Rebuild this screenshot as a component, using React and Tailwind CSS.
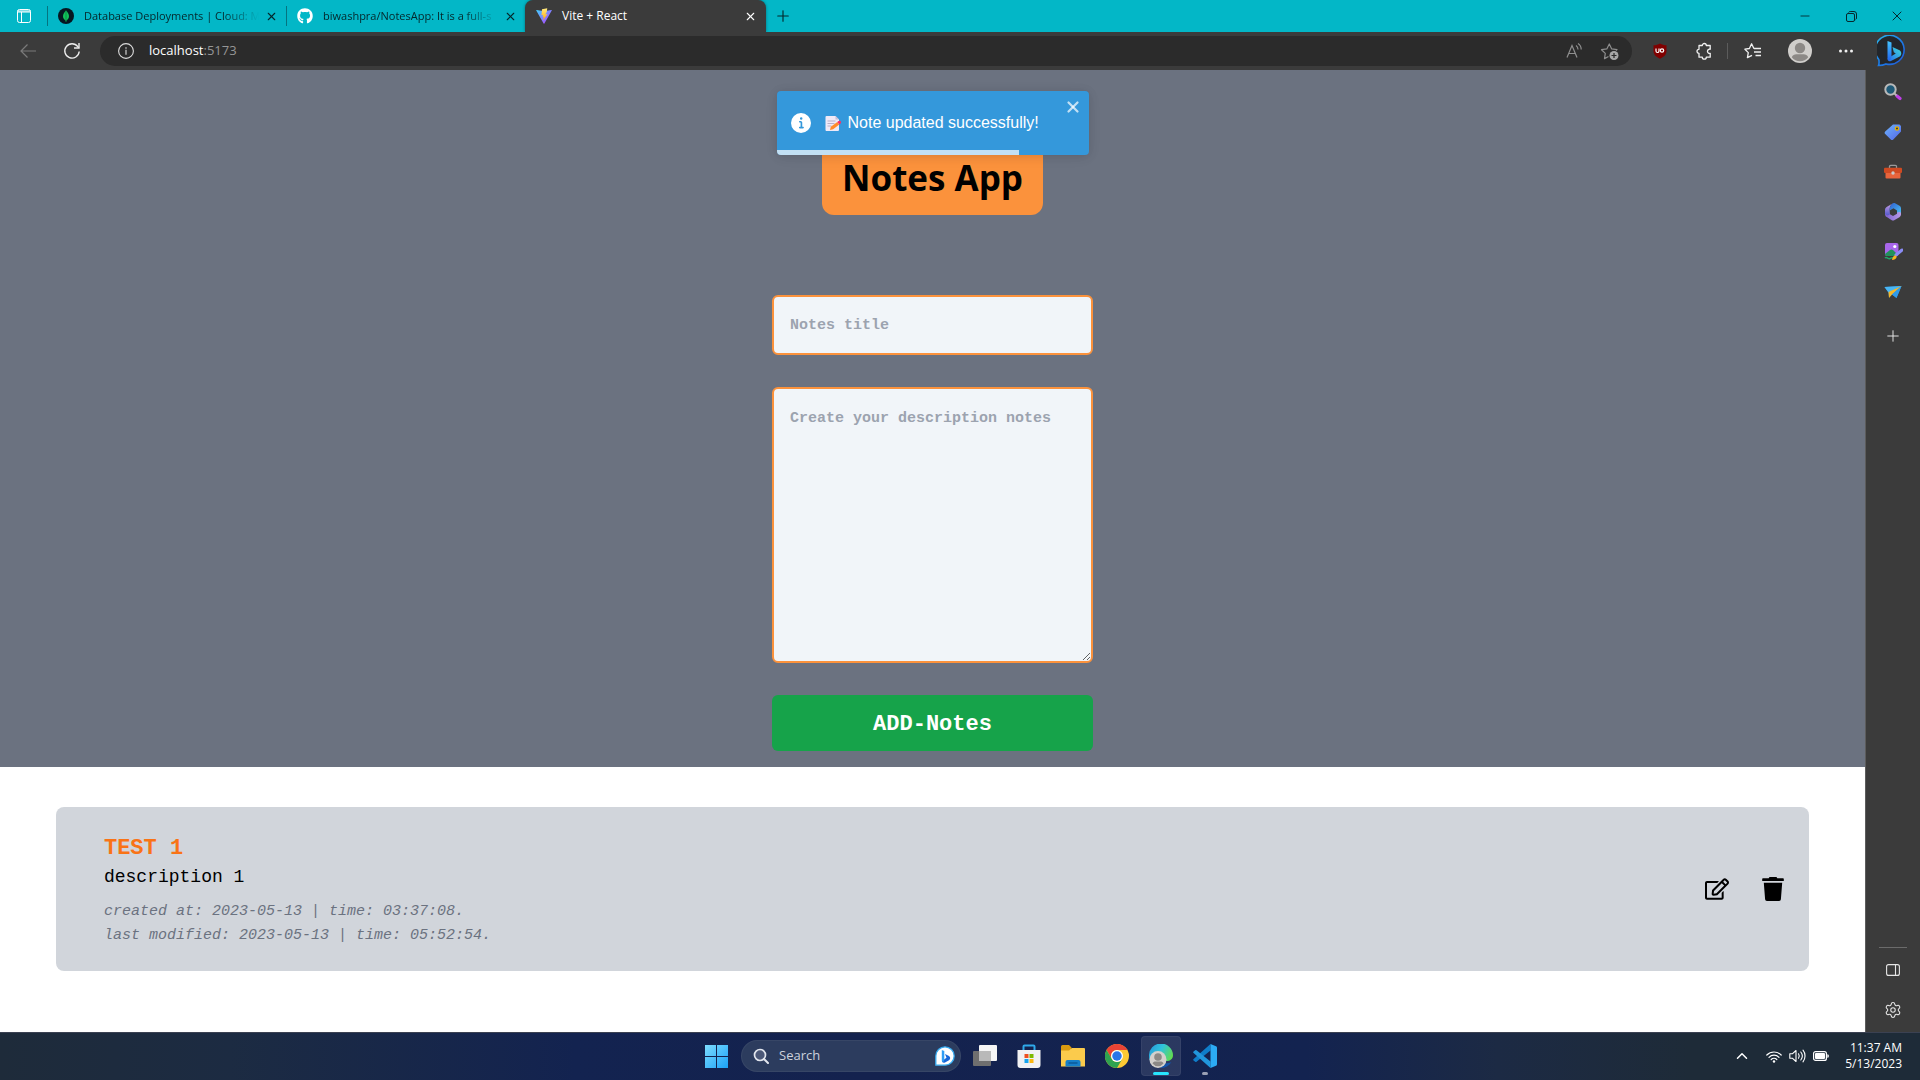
import React from "react";
import { FaGithub, FaRegEdit } from "react-icons/fa";
import { Settings, X, Plus, Minus, ChevronUp } from "lucide-react";

/* ---------- browser chrome icons ---------- */

const TabActionsIcon = () => (
  <svg width="16" height="16" viewBox="0 0 16 16" fill="none" stroke="#fff">
    <rect x="1.5" y="1.5" width="13" height="13" rx="2" />
    <path d="M1.5 3h13M1.5 4h13M5.5 4v10.5" />
  </svg>
);

const MongoIcon = () => (
  <svg width="16" height="16" viewBox="0 0 16 16" className="shrink-0">
    <circle cx="8" cy="8" r="8" fill="#061621" />
    <path d="M8 2.5c2 2 3 3.800 3 5.800S9.800 11.700 8.300 12.700V14h-.6v-1.300C6.200 11.700 5 10.300 5 8.300S6 4.500 8 2.500z" fill="#10c05a" />
    <path d="M8 2.500v10.200" stroke="#0b7a3c" strokeWidth=".7" />
  </svg>
);

const ViteIcon = () => (
  <svg width="16" height="16" viewBox="0 0 32 32">
    <defs>
      <linearGradient id="viteA" x1="0" y1="0" x2="1" y2="1">
        <stop offset="0" stopColor="#41d1ff" />
        <stop offset="1" stopColor="#bd34fe" />
      </linearGradient>
      <linearGradient id="viteB" x1="0" y1="0" x2="0" y2="1">
        <stop offset="0" stopColor="#ffea83" />
        <stop offset="1" stopColor="#ffa800" />
      </linearGradient>
    </defs>
    <path d="M31.500 5.200 16.800 31a1 1 0 0 1-1.600 0L.5 5.200A1 1 0 0 1 1.500 3.800L16 6.400l14.400-2.600a1 1 0 0 1 1.100 1.400z" fill="url(#viteA)" />
    <path d="M22.500.5 12 2.500 11 14.500l3.200-.6-1 4.400 2.500-.7L14 25l9-13-4.500.8 3-5z" fill="url(#viteB)" />
  </svg>
);

const BackIcon = () => (
  <svg width="18" height="18" viewBox="0 0 18 18" fill="none" stroke="#7b7b7b" strokeWidth="1.200">
    <path d="M17 9H2M8.500 2.500 2 9l6.500 6.500" />
  </svg>
);

const ReloadIcon = () => (
  <svg width="18" height="18" viewBox="0 0 18 18" fill="none" stroke="#ededed" strokeWidth="1.400">
    <path d="M16.200 9.500A7.200 7.200 0 1 1 14.800 4.600L15.800 5.800" />
    <path d="M16 1v5h-5" />
  </svg>
);

const InfoIcon = () => (
  <svg width="16" height="16" viewBox="0 0 16 16" fill="none" stroke="#dcdcdc">
    <circle cx="8" cy="8" r="7.400" strokeWidth="1.100" />
    <path d="M8 6.800v5M8 4.200v1.500" stroke="#a8a8a8" strokeWidth="1.600" />
  </svg>
);

const ReadAloudIcon = () => (
  <svg width="18" height="18" viewBox="0 0 18 18" fill="none" stroke="#8e8e8e" strokeWidth="1.200">
    <path d="M2 15.500 7 3.500l5 12M4 11.500h6" />
    <path d="M11 3.500c1.500 1 2 2.300 2 4M13 1.500c2.300 1.500 3.200 3.500 3.200 6" />
  </svg>
);

const StarPlusIcon = () => (
  <svg width="20" height="20" viewBox="0 0 20 20" fill="none" stroke="#8e8e8e" strokeWidth="1.200">
    <path d="M8.500 15.500l-4 2.100.8-5.200L1.500 8.700l5.300-.8L9.300 3l2.400 4.900 5.300.8-1 1" strokeLinejoin="round" />
    <circle cx="14" cy="14.500" r="4.500" fill="#a6a6a6" stroke="none" />
    <path d="M14 12v5M11.500 14.500h5" stroke="#292929" />
  </svg>
);

const ShieldIcon = () => (
  <svg width="16" height="16" viewBox="0 0 16 16">
    <path d="M8 .5c2 1.200 4 1.700 6.500 1.800V8c0 3.800-2.800 6-6.500 7.800C4.300 14 1.500 11.800 1.500 8V2.300C4 2.200 6 1.700 8 .5z" fill="#800000" />
    <path d="M4 5.500V8a1.500 1.500 0 0 0 3 0V5.500" fill="none" stroke="#fff" strokeWidth="1.200" />
    <circle cx="10" cy="7.500" r="1.700" fill="none" stroke="#fff" strokeWidth="1.200" />
  </svg>
);

const PuzzleIcon = () => (
  <svg width="18" height="18" viewBox="0 0 18 18" fill="none" stroke="#f0f0f0" strokeWidth="1.300" strokeLinejoin="round">
    <path d="M4 3.500h3.300a2 2 0 0 1 4 0h3.900v3.800a2.100 2.100 0 1 0 0 4v3.900h-3.900a2 2 0 0 1-4 0H4v-3.900a2 2 0 1 1 0-4z" />
  </svg>
);

const FavoritesIcon = () => (
  <svg width="18" height="18" viewBox="0 0 18 18" fill="none" stroke="#f0f0f0" strokeWidth="1.300" strokeLinejoin="round">
    <path d="M10 6.800 7.600 1.800 5.400 6.500.9 7.200l3.400 3.400-.9 5L8 13.300" />
    <path d="M10 6.500h7M10 10h7M11.500 13.500H17" />
  </svg>
);

const AvatarIcon = () => (
  <svg width="24" height="24" viewBox="0 0 24 24">
    <circle cx="12" cy="12" r="12" fill="#d0cecb" />
    <circle cx="12" cy="9" r="5.200" fill="#8c8986" />
    <path d="M3.800 18.200c1-2.200 2.600-3 4.500-3h7.400c1.900 0 3.500.8 4.500 3a10.400 10.400 0 0 1-16.400 0z" fill="#8c8986" />
  </svg>
);

const DotsIcon = () => (
  <svg width="16" height="16" viewBox="0 0 16 16" fill="#f0f0f0">
    <circle cx="2.500" cy="8" r="1.500" />
    <circle cx="8" cy="8" r="1.500" />
    <circle cx="13.500" cy="8" r="1.500" />
  </svg>
);

const BingIcon = () => (
  <svg width="32" height="32" viewBox="0 0 32 32">
    <defs>
      <linearGradient id="bingRing" x1="0" y1="0" x2="1" y2="1">
        <stop offset="0" stopColor="#2bb8e8" />
        <stop offset=".5" stopColor="#1c7fe8" />
        <stop offset="1" stopColor="#2257d8" />
      </linearGradient>
      <linearGradient id="bingB" x1="0" y1="0" x2="0" y2="1">
        <stop offset="0" stopColor="#45c4ff" />
        <stop offset="1" stopColor="#2168f0" />
      </linearGradient>
      <linearGradient id="bingC" x1="0" y1="1" x2="1" y2="0">
        <stop offset="0" stopColor="#2466f0" />
        <stop offset="1" stopColor="#3fdcd8" />
      </linearGradient>
    </defs>
    <path d="M1.500 30.500c.8-2 .8-3.500.3-6A14.500 14.500 0 1 1 9 28.900c-2.200 1-4.700 1.500-7.500 1.600z" fill="#23262b" stroke="url(#bingRing)" strokeWidth="1.600" />
    <path d="M15.500 12l6.500 3c2.800 1.300 3 5 .7 6.600L14 26c-2 .8-3.500 0-3.500-2.500l8.300-5-2-1.200z" fill="url(#bingC)" />
    <path d="M10.500 6l4 1.500v13.800l-1 3.500c-1.500.8-3 .2-3-1.800z" fill="url(#bingB)" />
  </svg>
);

const RestoreIcon = () => (
  <svg width="11" height="11" viewBox="0 0 11 11" fill="none" stroke="#06282c">
    <rect x=".5" y="2.500" width="8" height="8" rx="1.500" />
    <path d="M2.500 1.500c.4-.7 1-1 1.700-1H8A2.500 2.500 0 0 1 10.500 3v4c0 .7-.3 1.300-1 1.700" />
  </svg>
);

/* ---------- sidebar icons ---------- */

const SearchColorIcon = () => (
  <svg width="18" height="18" viewBox="0 0 18 18">
    <path d="M13 13l3 2.500" stroke="#c03fe8" strokeWidth="3.200" strokeLinecap="round" />
    <path d="M10.500 10.500l2 2" stroke="#b9b9b9" strokeWidth="1.800" />
    <circle cx="6.500" cy="6.500" r="5.200" fill="#1f5a78" stroke="#b9b9b9" strokeWidth="2" />
  </svg>
);

const TagIcon = () => (
  <svg width="18" height="18" viewBox="0 0 18 18">
    <defs>
      <linearGradient id="tagA" x1="0" y1="0" x2="1" y2="1">
        <stop offset="0" stopColor="#6cb4fb" />
        <stop offset="1" stopColor="#5565e8" />
      </linearGradient>
    </defs>
    <path d="M9 1.500h6.500l1.500 1.500v5.500L9.300 16.400a1.800 1.800 0 0 1-2.500 0L1.200 11a1.800 1.800 0 0 1 0-2.500z" fill="url(#tagA)" />
    <circle cx="13" cy="5.500" r="1.700" fill="#3d3d3d" stroke="#e8b400" strokeWidth="1.200" />
  </svg>
);

const ToolboxIcon = () => (
  <svg width="18" height="18" viewBox="0 0 18 18">
    <path d="M5.500 5V3.500a1.200 1.200 0 0 1 1.200-1.200h4.600a1.200 1.200 0 0 1 1.200 1.200V5" fill="none" stroke="#9a9a9a" strokeWidth="1.300" />
    <path d="M1.500 9h15v5.500a1 1 0 0 1-1 1h-13a1 1 0 0 1-1-1z" fill="#e8643c" />
    <rect y="4.800" width="18" height="5.200" rx="1" fill="#d04a22" />
    <circle cx="9" cy="10" r="1.700" fill="#c8c8c8" />
  </svg>
);

const M365Icon = () => (
  <svg width="18" height="18" viewBox="0 0 18 18">
    <defs>
      <linearGradient id="mA" x1="0" y1="0" x2="0" y2="1">
        <stop offset="0" stopColor="#c9a0e8" />
        <stop offset="1" stopColor="#4a54c8" />
      </linearGradient>
      <linearGradient id="mB" x1="0" y1="0" x2="1" y2="1">
        <stop offset="0" stopColor="#2f5fd0" />
        <stop offset="1" stopColor="#4cc4f4" />
      </linearGradient>
      <linearGradient id="mC" x1="0" y1="0" x2="1" y2="0">
        <stop offset="0" stopColor="#7b5fd0" />
        <stop offset="1" stopColor="#b89be6" />
      </linearGradient>
    </defs>
    <path d="M9 .3 2.600 3.900A3.200 3.200 0 0 0 1 6.700v5.100l5.200 1.500-.6-6.300C5.600 4 6.500 1.500 9 .3z" fill="url(#mA)" />
    <path d="M9 .3c1-.4 1.600-.3 2.500.2l4 2.300C16.500 3.400 17 4.400 17 5.500v6l-4-1V7.500L9.500 5.300 5.700 7.500C5.500 4 6.700 1.300 9 .3z" fill="url(#mB)" />
    <path d="M1 10.500c0 2.500.8 3 1.800 3.600l4.600 2.900a3 3 0 0 0 3.200 0l4.800-2.800A3.200 3.200 0 0 0 17 11.500V10c-.5-1-2-1.500-4-.5v1.200l-4 2.400-3-1.800C4.500 12.500 2.500 12.800 1 10.500z" fill="url(#mC)" />
  </svg>
);

const DesignerIcon = () => (
  <svg width="19" height="18" viewBox="0 0 19 18">
    <rect x="1" y="0" width="13.500" height="13" rx="2" fill="#a866ea" />
    <circle cx="10.800" cy="3.500" r="1.600" fill="#fff" />
    <path d="M1 11l5-4c1-.8 2-.8 3 0l4 4v2H3a2 2 0 0 1-2-2z" fill="#21925b" />
    <path d="M1 15c2-2 3 1.500 5 .5s2-1.500 4 0" fill="none" stroke="#1fa768" strokeWidth="1.500" />
    <path d="M12 12l6-5" stroke="#8a8cf5" strokeWidth="3" strokeLinecap="round" />
    <path d="M8 17c.5-3 1.500-4.500 3.500-4.500S13 17 8 17z" fill="#f8b51e" />
  </svg>
);

const PlaneIcon = () => (
  <svg width="18" height="18" viewBox="0 0 18 18">
    <path d="M.5 4 17.500 3 12.500 15 8 11.500 5 14.500 4.500 9.500z" fill="#2a92e0" />
    <path d="M.5 4 17.500 3 4.500 9.500z" fill="#48b6f5" />
    <path d="M4.500 9 17.500 3 8 11.500 5 15z" fill="#f4b82b" />
    <path d="M8 11.500 17.500 3 12.500 15z" fill="#2f9bea" />
  </svg>
);

const PanelIcon = () => (
  <svg width="14" height="12" viewBox="0 0 14 12" fill="none" stroke="#e6e6e6" strokeWidth="1.100">
    <rect x=".6" y=".6" width="12.800" height="10.800" rx="2" />
    <path d="M9.500.6v10.800" />
  </svg>
);

/* ---------- page icons ---------- */

const ToastInfoIcon = () => (
  <svg width="20" height="20" viewBox="0 0 24 24" fill="#fff">
    <path d="M12 0a12 12 0 1 0 12 12A12.013 12.013 0 0 0 12 0zm.25 5a1.500 1.500 0 1 1-1.500 1.500 1.500 1.500 0 0 1 1.500-1.500zm2.250 13.500h-4a1 1 0 0 1 0-2h.75a.25.25 0 0 0 .25-.25v-4.500a.25.25 0 0 0-.25-.25h-.75a1 1 0 0 1 0-2h1a2 2 0 0 1 2 2v4.750a.25.25 0 0 0 .25.25h.75a1 1 0 1 1 0 2z" />
  </svg>
);

const MemoIcon = () => (
  <svg width="16" height="17" viewBox="0 0 16 17">
    <path d="M1.500 1h9L14 4.500V15a1 1 0 0 1-1 1H1.500a1 1 0 0 1-1-1V2a1 1 0 0 1 1-1z" fill="#efe9f7" />
    <path d="M10.500 1v3.500H14z" fill="#c6bdd6" />
    <path d="M2.500 6h8M2.500 8.500h7M2.500 11h4" stroke="#b9afc9" strokeWidth="1.100" />
    <path d="M5 15l.8-3.300 6.500-4.700 2 2.600-6.200 4.700z" fill="#ff8b2b" />
    <path d="M12.300 7l1.200-.9a1.400 1.400 0 0 1 2 2.500l-1.200 1z" fill="#f5316b" />
  </svg>
);

const TrashIcon = () => (
  <svg width="24" height="24" viewBox="0 0 24 24" fill="#000">
    <path d="M8.500 0h7l.8 1.300H22a.8.800 0 0 1 .8.800v2H1.200v-2a.8.800 0 0 1 .8-.8h5.700z" />
    <path d="M2.800 5.800h18.400l-1.300 16.500a1.800 1.800 0 0 1-1.800 1.700H5.900a1.800 1.800 0 0 1-1.800-1.700z" />
  </svg>
);

/* ---------- taskbar icons ---------- */

const WindowsIcon = () => (
  <svg width="23" height="23" viewBox="0 0 23 23">
    <defs>
      <linearGradient id="winA" x1="0" y1="0" x2="1" y2="1">
        <stop offset="0" stopColor="#7ddcff" />
        <stop offset="1" stopColor="#1ba2f7" />
      </linearGradient>
    </defs>
    <path d="M0 0h11v11H0zM12 0h11v11H12zM0 12h11v11H0zM12 12h11v11H12z" fill="url(#winA)" />
  </svg>
);

const SearchIcon = () => (
  <svg width="16" height="16" viewBox="0 0 16 16" fill="none" stroke="#e2e6ee" strokeWidth="1.700">
    <circle cx="7" cy="7" r="5.500" fill="#4b5878" />
    <path d="M11 11l4 4" strokeWidth="2" strokeLinecap="round" />
  </svg>
);

const BingSmallIcon = () => (
  <svg width="20" height="20" viewBox="0 0 20 20">
    <path d="M.8 19.200V10A9.200 9.200 0 1 1 10 19.200z" fill="#fff" stroke="#35a9ee" strokeWidth="1.300" />
    <path d="M10 8l4 2c1.600.9 1.600 3.200 0 4.200l-4 2.200c-1.500.7-3 .2-3-1.400l4.500-3.200z" fill="#1766d8" />
    <path d="M6.800 4l2.500 1v8.800l-.8 2c-1 .2-1.700-.3-1.700-1.300z" fill="#2f9df4" />
  </svg>
);

const TaskViewIcon = () => (
  <svg width="24" height="24" viewBox="0 0 24 24">
    <rect x="6" y="1" width="18" height="16" rx="1" fill="#f5f5f5" />
    <rect x="0" y="7" width="18" height="15" rx="1" fill="#6f6f6f" />
    <path d="M6 7h12v10H6z" fill="#b9b9b9" />
  </svg>
);

const StoreIcon = () => (
  <svg width="24" height="24" viewBox="0 0 24 24">
    <path d="M6.500 7V2.500a1 1 0 0 1 1-1h9a1 1 0 0 1 1 1V7" fill="none" stroke="#2fa9ea" strokeWidth="2" />
    <path d="M.5 6h23v15a3 3 0 0 1-3 3h-17a3 3 0 0 1-3-3z" fill="#f1f1f3" />
    <path d="M7.500 10h4v4h-4z" fill="#ee5022" />
    <path d="M12.500 10h4v4h-4z" fill="#7db900" />
    <path d="M7.500 15h4v4h-4z" fill="#17a4ee" />
    <path d="M12.500 15h4v4h-4z" fill="#fcb710" />
  </svg>
);

const ExplorerIcon = () => (
  <svg width="24" height="24" viewBox="0 0 24 24">
    <path d="M0 2.500A1.500 1.500 0 0 1 1.500 1H8l2.500 2.500V8H0z" fill="#d99a10" />
    <path d="M0 6.500h8L11 4h12a1 1 0 0 1 1 1v17.500H0z" fill="#fbcb4c" />
    <path d="M4.500 22.500V18a2 2 0 0 1 2-2h11a2 2 0 0 1 2 2v4.500z" fill="#167fc9" />
    <path d="M7.500 19h9" stroke="#0c5a98" strokeWidth="1.500" />
  </svg>
);

const ChromeIcon = () => (
  <svg width="24" height="24" viewBox="0 0 48 48">
    <circle cx="24" cy="24" r="24" fill="#fcc934" />
    <path d="M3.200 12A24 24 0 0 1 44.800 12H24a12 12 0 0 0-10.400 18z" fill="#ea4335" />
    <path d="M3.200 12A24 24 0 0 0 24 48l10.400-18a12 12 0 0 1-20.800 0z" fill="#2fa350" />
    <circle cx="24" cy="24" r="12" fill="#fff" />
    <circle cx="24" cy="24" r="9.500" fill="#2a76e8" />
  </svg>
);

const EdgeIcon = () => (
  <svg width="24" height="24" viewBox="0 0 24 24">
    <defs>
      <linearGradient id="edgeA" x1="0" y1="0" x2="1" y2=".5">
        <stop offset="0" stopColor="#2794d8" />
        <stop offset=".5" stopColor="#2fc2dc" />
        <stop offset="1" stopColor="#62dc50" />
      </linearGradient>
    </defs>
    <path d="M0 12A12 12 0 0 1 24 11c0 4-3 6-6.500 6-3 0-4-1.500-3-3l-4 8C4 22 0 18 0 12z" fill="url(#edgeA)" />
    <path d="M9 15c1 4 7 6 13.500 3C20 22 16 24 12 24z" fill="#1453a8" />
    <g transform="translate(0 6.500)">
      <circle cx="9" cy="9" r="8.500" fill="#d3d0cd" />
      <circle cx="9" cy="6.500" r="3.800" fill="#8c8986" />
      <path d="M3.500 13c.6-1.500 1.700-2 3-2h5c1.300 0 2.400.5 3 2A7 7 0 0 1 3.500 13z" fill="#8c8986" />
    </g>
  </svg>
);

const VSCodeIcon = () => (
  <svg width="24" height="24" viewBox="0 0 24 24">
    <path d="M17.500 0v6.500L3.500 17.800a1 1 0 0 1-1.300 0L.6 16.400a1 1 0 0 1 0-1.500z" fill="#0f7dc9" />
    <path d="M17.500 24v-6.500L3.500 6.200a1 1 0 0 0-1.300 0L.6 7.600a1 1 0 0 0 0 1.500z" fill="#2196dc" />
    <path d="M17.500 0 23 2.300a1.500 1.500 0 0 1 1 1.400v16.600a1.500 1.500 0 0 1-1 1.400L17.500 24z" fill="#2cabf4" />
  </svg>
);

const WifiIcon = () => (
  <svg width="16" height="13" viewBox="0 0 16 13" fill="none" stroke="#fff" strokeWidth="1.200" strokeLinecap="round">
    <path d="M.8 5a10.200 10.200 0 0 1 14.400 0M3 7.300a7 7 0 0 1 10 0M5.200 9.500a4 4 0 0 1 5.600 0" />
    <circle cx="8" cy="11.500" r="1.200" fill="#fff" stroke="none" />
  </svg>
);

const VolumeIcon = () => (
  <svg width="17" height="14" viewBox="0 0 17 14" fill="none" stroke="#fff" strokeWidth="1.100" strokeLinecap="round" strokeLinejoin="round">
    <path d="M.8 4.800h2.500L7 1.500v11L3.300 9.200H.8z" />
    <path d="M9.500 4.800c.9 1.300.9 3.100 0 4.400M11.800 3c1.800 2.300 1.800 5.700 0 8M14 1.200c2.700 3.300 2.700 8.300 0 11.600" />
  </svg>
);

const BatteryIcon = () => (
  <svg width="16" height="10" viewBox="0 0 16 10">
    <rect x=".6" y=".6" width="12.800" height="8.800" rx="2" fill="none" stroke="#fff" strokeWidth="1.200" />
    <rect x="2" y="2" width="10" height="6" rx="1" fill="#fff" />
    <path d="M14.300 3.200c1.200 0 1.500.8 1.500 1.800s-.3 1.800-1.500 1.800z" fill="#fff" />
  </svg>
);

/* ---------- browser ---------- */

function BackgroundTab({ icon, title }) {
  return (
    <div className="flex h-full w-[238px] shrink-0 items-center pr-[7px] pl-2.5">
      {icon}
      <span className="ml-2.5 min-w-0 flex-1 text-[11px] whitespace-nowrap text-[#05262a] [mask-image:linear-gradient(to_right,black_calc(100%-40px),transparent_calc(100%-4px))]">
        {title}
      </span>
      <button aria-label="Close tab" className="flex h-4 w-4 shrink-0 items-center justify-center text-[#05262a]">
        <X size={13} strokeWidth={2} />
      </button>
    </div>
  );
}

function TabStrip() {
  return (
    <div className="flex h-8 items-center bg-[#03b7c7]">
      <button aria-label="Tab actions" className="flex h-8 w-[47px] shrink-0 items-center justify-center">
        <TabActionsIcon />
      </button>
      <div className="h-5 w-px shrink-0 bg-[#057480]" />
      <BackgroundTab icon={<MongoIcon />} title="Database Deployments | Cloud: M" />
      <div className="h-5 w-px shrink-0 bg-[#057480]" />
      <BackgroundTab icon={<FaGithub size={16} color="#fff" className="shrink-0" />} title="biwashpra/NotesApp: It is a full-s" />
      <div className="flex h-8 w-[241px] shrink-0 items-center rounded-t-lg bg-[#3b3b3b] pr-2 pl-[11px] text-white shadow-[0_0_3px_#0006]">
        <ViteIcon />
        <span className="ml-2.5 flex-1 text-[12px]">Vite + React</span>
        <button aria-label="Close tab" className="flex h-4 w-4 items-center justify-center">
          <X size={13} strokeWidth={2} />
        </button>
      </div>
      <button aria-label="New tab" className="ml-2 flex h-6 w-[18px] items-center justify-center text-[#05262a]">
        <Plus size={18} strokeWidth={1.5} className="shrink-0" />
      </button>
      <div className="ml-auto flex h-full">
        <button aria-label="Minimize" className="flex w-[46px] items-center justify-center text-[#06282c]">
          <Minus size={14} strokeWidth={1.5} />
        </button>
        <button aria-label="Restore" className="flex w-[46px] items-center justify-center">
          <RestoreIcon />
        </button>
        <button aria-label="Close window" className="flex w-[46px] items-center justify-center text-[#06282c]">
          <X size={16} strokeWidth={1.5} />
        </button>
      </div>
    </div>
  );
}

function ToolButton({ label, children, className = "w-11" }) {
  return (
    <button aria-label={label} className={"flex h-8 shrink-0 items-center justify-center " + className}>
      {children}
    </button>
  );
}

function Toolbar() {
  return (
    <div className="flex h-[38px] items-center bg-[#3b3b3b] pr-[11px] pl-1.5">
      <ToolButton label="Back">
        <BackIcon />
      </ToolButton>
      <ToolButton label="Refresh">
        <ReloadIcon />
      </ToolButton>
      <div className="ml-1.5 flex h-[30px] flex-1 items-center rounded-full bg-[#2b2b2b] pr-1 pl-[18px]">
        <InfoIcon />
        <div className="ml-[15px] flex-1 text-[13px] text-white">
          localhost<span className="text-[#969696]">:5173</span>
        </div>
        <ToolButton label="Read aloud" className="w-9">
          <ReadAloudIcon />
        </ToolButton>
        <ToolButton label="Add to favorites" className="w-9">
          <StarPlusIcon />
        </ToolButton>
      </div>
      <ToolButton label="uBlock" className="ml-1.5 w-11">
        <ShieldIcon />
      </ToolButton>
      <ToolButton label="Extensions">
        <PuzzleIcon />
      </ToolButton>
      <div className="ml-px h-4 w-px bg-[#5c5c5c]" />
      <ToolButton label="Favorites" className="w-[50px]">
        <FavoritesIcon />
      </ToolButton>
      <ToolButton label="Profile">
        <AvatarIcon />
      </ToolButton>
      <ToolButton label="Settings and more" className="ml-1 w-10">
        <DotsIcon />
      </ToolButton>
      <ToolButton label="Bing" className="ml-[11px] w-8">
        <BingIcon />
      </ToolButton>
    </div>
  );
}

const sidebarItems = [
  ["Search", SearchColorIcon],
  ["Shopping", TagIcon],
  ["Tools", ToolboxIcon],
  ["Microsoft 365", M365Icon],
  ["Image Creator", DesignerIcon],
  ["Drop", PlaneIcon],
];

function Sidebar() {
  return (
    <aside className="flex w-[55px] shrink-0 flex-col items-center border-l border-[#5c5c5c] bg-[#3b3b3b] pt-[2px]">
      {sidebarItems.map(([label, Icon]) => (
        <button key={label} aria-label={label} className="flex h-10 w-10 items-center justify-center">
          <Icon />
        </button>
      ))}
      <button aria-label="Add" className="mt-1 flex h-10 w-10 items-center justify-center text-[#e6e6e6]">
        <Plus size={18} strokeWidth={1.3} />
      </button>
      <div className="mt-auto h-px w-7 bg-[#6b6b6b]" />
      <button aria-label="Hide sidebar" className="mt-[2px] flex h-10 w-10 items-center justify-center">
        <PanelIcon />
      </button>
      <button aria-label="Sidebar settings" className="mb-[2px] flex h-10 w-10 items-center justify-center text-[#e6e6e6]">
        <Settings size={18} strokeWidth={1.4} />
      </button>
    </aside>
  );
}

/* ---------- notes page ---------- */

function Toast() {
  return (
    <div
      role="alert"
      className="absolute top-[21px] left-1/2 flex h-16 w-[312px] -translate-x-1/2 items-center overflow-hidden rounded bg-[#3498db] pl-3.5 font-['Liberation_Sans',sans-serif] text-[16px] text-white shadow-[0_1px_10px_rgba(0,0,0,0.1),0_2px_15px_rgba(0,0,0,0.05)]"
    >
      <ToastInfoIcon />
      <span className="ml-3.5 flex items-center gap-[7px] whitespace-nowrap">
        <MemoIcon />
        Note updated successfully!
      </span>
      <button aria-label="close" className="absolute top-2 right-2 flex h-4 w-4 items-center justify-center text-white/70">
        <X size={18} strokeWidth={3} className="shrink-0" />
      </button>
      <div className="absolute bottom-0 left-0 h-[5px] w-[242px] bg-white/70" />
    </div>
  );
}

function NotesPage() {
  return (
    <main className="relative flex-1 bg-white font-['Liberation_Mono',monospace]">
      <Toast />
      <section className="flex flex-col items-center bg-[#6b7280] pt-16 pb-4">
        <h1 className="rounded-xl bg-[#fb923c] px-5 pt-6 pb-[17px] font-['Open_Sans','Noto_Sans',sans-serif] text-[35px] leading-10 font-bold text-black">
          Notes App
        </h1>
        <form className="mt-20 flex w-[321px] flex-col gap-8" onSubmit={(e) => e.preventDefault()}>
          <input
            aria-label="Notes title"
            placeholder="Notes title"
            className="h-[60px] rounded-md border-2 border-[#fb923c] bg-[#f1f5f9] px-4 text-[15px] font-bold placeholder:text-[#9ca3af]"
          />
          <textarea
            aria-label="Create your description notes"
            placeholder="Create your description notes"
            className="block h-[276px] resize rounded-md border-2 border-[#fb923c] bg-[#f1f5f9] px-4 py-[18px] text-[15px] leading-6 font-bold placeholder:text-[#9ca3af]"
          />
          <button className="h-14 rounded-md bg-[#16a34a] pt-[2px] text-[22px] font-bold text-white">ADD-Notes</button>
        </form>
      </section>
      <article className="mx-[3%] mt-10 flex items-center justify-between rounded-lg bg-[#d1d5db] pr-6 pl-12">
        <div className="pt-[26px] pb-[23px]">
          <h2 className="text-[22px] leading-8 font-bold text-[#f97316]">TEST 1</h2>
          <p className="text-[18px] leading-6 text-black">description 1</p>
          <div className="mt-[11px] text-[15px] leading-6 text-[#6b7280] italic">
            <p>created at: 2023-05-13 | time: 03:37:08.</p>
            <p>last modified: 2023-05-13 | time: 05:52:54.</p>
          </div>
        </div>
        <div className="flex gap-8">
          <button aria-label="Edit note" className="text-black">
            <FaRegEdit size={24} />
          </button>
          <button aria-label="Delete note">
            <TrashIcon />
          </button>
        </div>
      </article>
    </main>
  );
}

/* ---------- taskbar ---------- */

function TaskButton({ label, children, active, running }) {
  return (
    <button aria-label={label} className="relative flex h-12 w-11 shrink-0 items-center justify-center">
      {active && <span className="absolute inset-x-[2px] inset-y-1 rounded border border-white/5 bg-white/10" />}
      <span className="relative">{children}</span>
      {active && <span className="absolute bottom-[5px] left-1/2 h-[3px] w-4 -translate-x-1/2 rounded-full bg-[#28e6ff]" />}
      {running && <span className="absolute bottom-[5px] left-1/2 h-[3px] w-1.5 -translate-x-1/2 rounded-full bg-[#9aa0b4]" />}
    </button>
  );
}

function Taskbar() {
  return (
    <footer className="grid h-12 grid-cols-[1fr_auto_1fr] items-center bg-[linear-gradient(to_right,#1e2b3a_0%,#1c2b42_12%,#132350_30%,#14224e_45%,#132350_68%,#1c2a44_78%,#1e2b38_88%)] shadow-[inset_0_1px_0_#3b4152]">
      <div />
      <div className="flex items-center pl-px">
        <TaskButton label="Start">
          <WindowsIcon />
        </TaskButton>
        <label className="mr-[2px] ml-[3px] flex h-8 w-[220px] items-center rounded-full border border-white/5 bg-[#2c3c5e] pr-[5px] pl-[11px]">
          <SearchIcon />
          <input
            aria-label="Search"
            placeholder="Search"
            className="ml-2.5 min-w-0 flex-1 bg-transparent text-[13px] text-white outline-none placeholder:text-[#cdd2dc]"
          />
          <BingSmallIcon />
        </label>
        <TaskButton label="Task view"><TaskViewIcon /></TaskButton>
        <TaskButton label="Microsoft Store"><StoreIcon /></TaskButton>
        <TaskButton label="File Explorer"><ExplorerIcon /></TaskButton>
        <TaskButton label="Chrome"><ChromeIcon /></TaskButton>
        <TaskButton label="Edge" active><EdgeIcon /></TaskButton>
        <TaskButton label="Visual Studio Code" running><VSCodeIcon /></TaskButton>
      </div>
      <div className="flex items-center justify-end pr-[18px] text-white">
        <button aria-label="Show hidden icons">
          <ChevronUp size={18} strokeWidth={2} />
        </button>
        <div className="ml-[15px] flex items-center gap-[7px]">
          <WifiIcon />
          <VolumeIcon />
          <BatteryIcon />
        </div>
        <div className="ml-4 text-right text-[12px] leading-4">
          <div>11:37 AM</div>
          <div>5/13/2023</div>
        </div>
      </div>
    </footer>
  );
}

export default function App() {
  return (
    <div className="flex min-h-screen flex-col font-['Open_Sans','Noto_Sans',sans-serif]">
      <TabStrip />
      <Toolbar />
      <div className="flex flex-1">
        <NotesPage />
        <Sidebar />
      </div>
      <Taskbar />
    </div>
  );
}
